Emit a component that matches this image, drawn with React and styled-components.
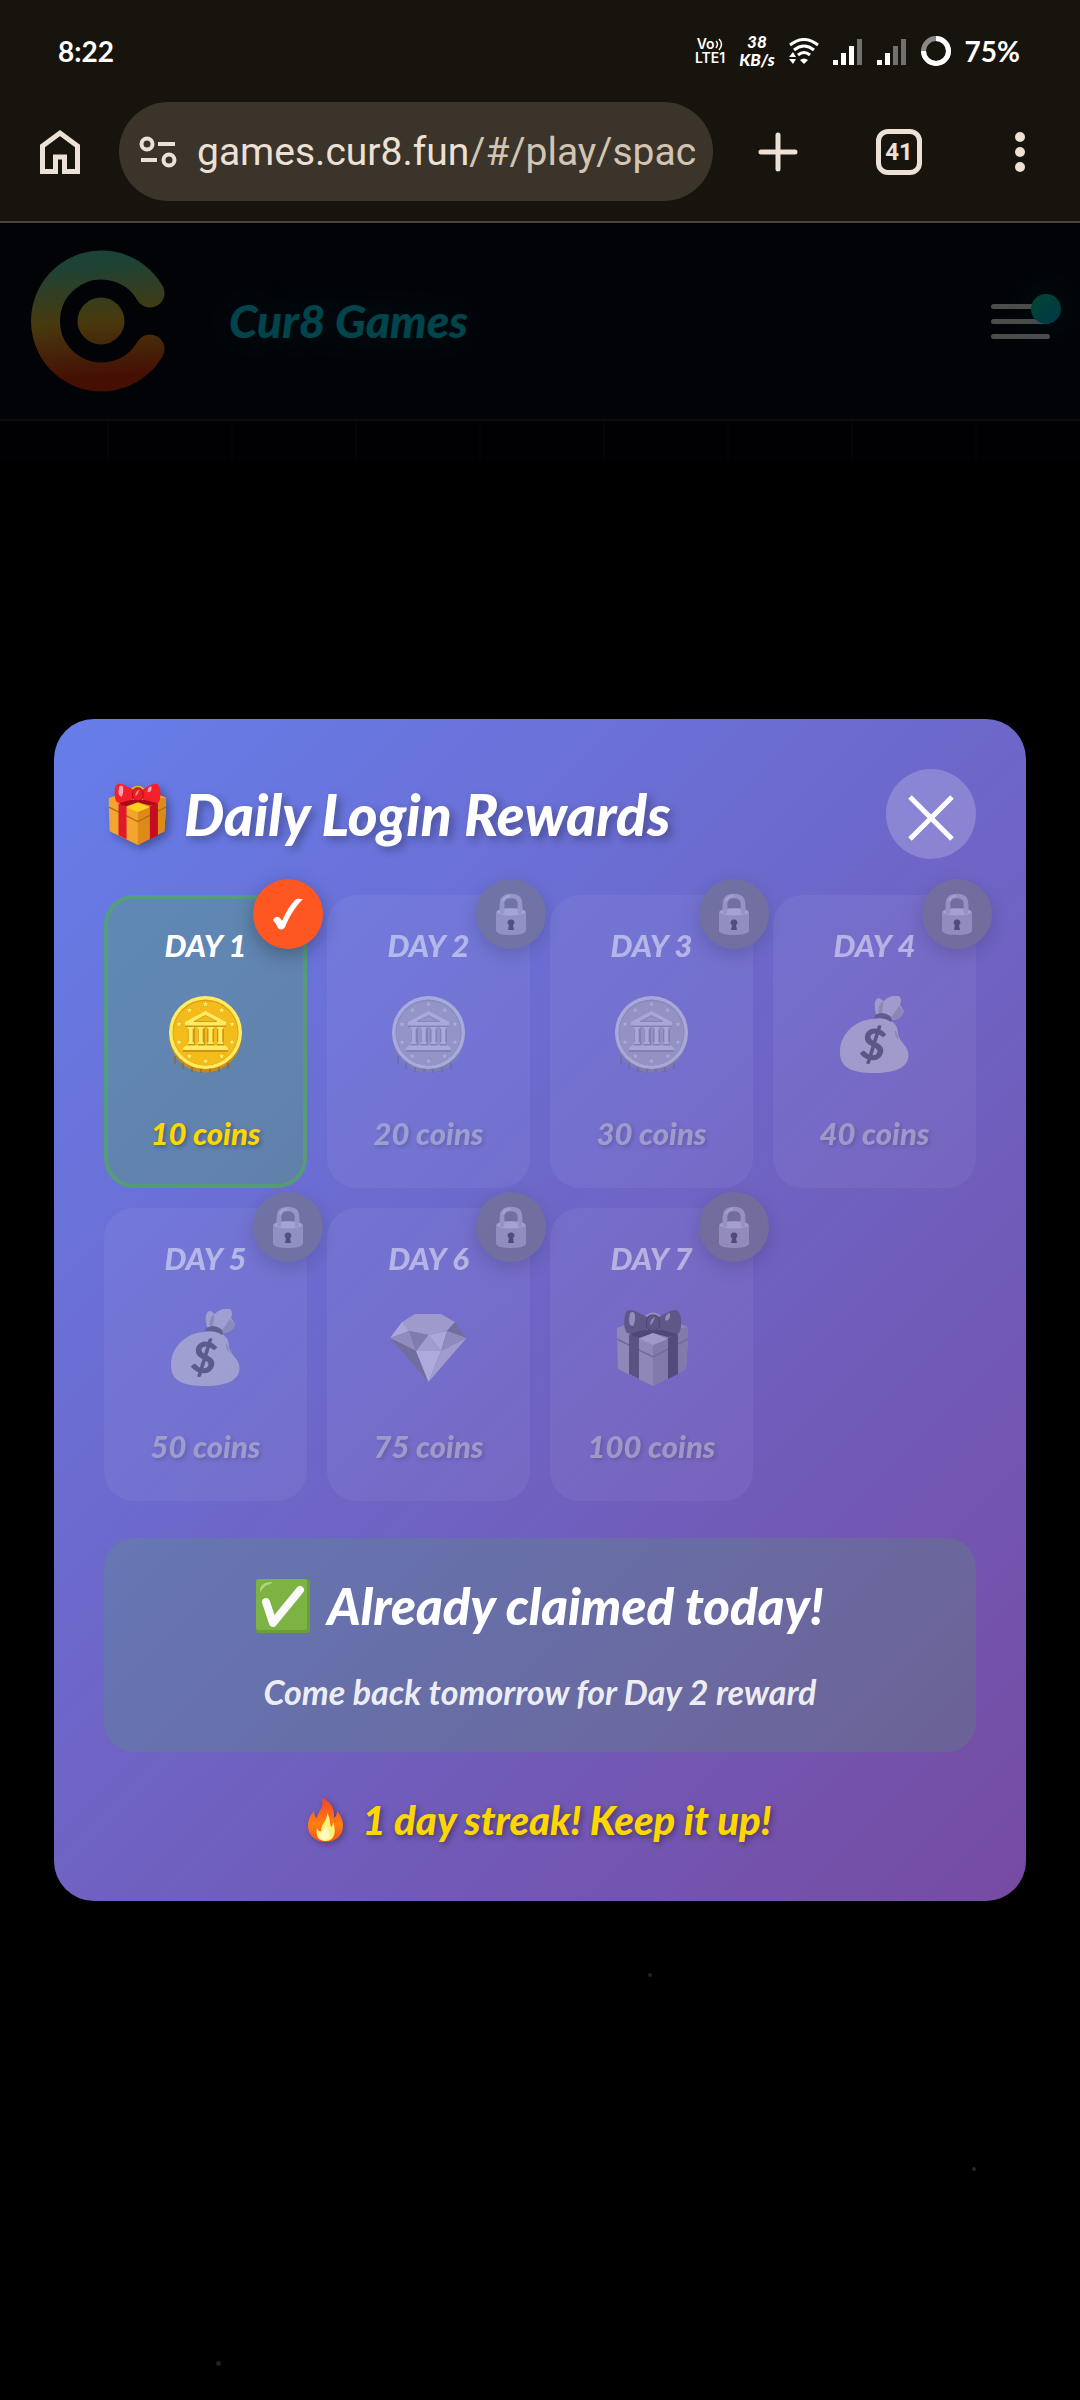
import React from 'react'
import styled, { createGlobalStyle } from "styled-components"

const GlobalStyle = createGlobalStyle`
* { box-sizing:border-box; }
body {
  margin:0;
  background-color:#000;
  font-family:Lato, "Liberation Sans", sans-serif;
}
button { font-family:inherit; }
svg { display:block; flex-shrink:0; }
`

const Page = styled.div`
display:flex;
flex-direction:column;
min-height:100vh;
`

/* phone and browser bars */

const Chrome = styled.div`
background-color:#17130d;
border-bottom:2px solid #4d453b;
`

const StatusBar = styled.div`
display:flex;
align-items:center;
justify-content:space-between;
height:102px;
padding:0 60px 0 58px;
color:white;
font-size:28px;
font-weight:700;
`

const StatusIcons = styled.div`
display:flex;
align-items:center;
gap:14px;
`

const Stacked = styled.div`
display:flex;
flex-direction:column;
align-items:center;
font-family:${({plain}) => plain ? "Inter, sans-serif" : "inherit"};
font-size:${({plain}) => plain ? "14px" : "17px"};
line-height:${({plain}) => plain ? "14px" : "18px"};
font-weight:${({plain}) => plain ? 600 : 900};
font-style:${({plain}) => plain ? "normal" : "italic"};
`

const Toolbar = styled.div`
display:flex;
align-items:center;
height:99px;
margin-bottom:20px;
padding:0 34px;
`

const BarButton = styled.button`
display:flex;
align-items:center;
justify-content:center;
width:52px;
height:72px;
padding:0;
border:none;
background-color:transparent;
cursor:pointer;
`

const AddressBar = styled.div`
display:flex;
align-items:center;
gap:20px;
flex:1;
min-width:0;
height:99px;
margin:0 39px 0 33px;
padding:0 16px 0 20px;
border-radius:50px;
background-color:#3b342b;
`

const Url = styled.a`
flex:1;
overflow:hidden;
white-space:nowrap;
font-family:Roboto, sans-serif;
font-size:39px;
line-height:56px;
color:#d3c4b4;
text-decoration:none;
`

const Host = styled.span`
color:#ede0d4;
`

const BarActions = styled.div`
display:flex;
align-items:center;
gap:69px;
`

const TabCount = styled.span`
display:flex;
align-items:center;
justify-content:center;
width:46px;
height:46px;
border:5px solid #ede0d4;
border-radius:12px;
color:#ede0d4;
font-family:Roboto, sans-serif;
font-size:24px;
font-weight:700;
`

/* game site */

const Site = styled.div`
position:relative;
flex:1;
display:flex;
flex-direction:column;
background-color:#000004;
`

const SiteHeader = styled.header`
display:flex;
align-items:center;
height:198px;
padding:0 30px 0 31px;
border-bottom:2px solid #2e2e2e;
background-color:#070a17;
`

const Brand = styled.h1`
flex:1;
margin:0 0 0 56px;
font-size:46px;
line-height:56px;
font-weight:900;
font-style:italic;
color:#00e5ff;
text-shadow:0 0 40px rgba(0,229,255,0.4);
`

const MenuButton = styled.button`
position:relative;
display:flex;
flex-direction:column;
gap:10px;
width:59px;
padding:0;
border:none;
background-color:transparent;
cursor:pointer;
`

const MenuLine = styled.span`
height:5px;
border-radius:3px;
background-color:#fff;
`

const MenuDot = styled.span`
position:absolute;
top:-10px;
right:-11px;
width:30px;
height:30px;
border-radius:50%;
background:linear-gradient(135deg,#00f0a8,#00b8f0);
box-shadow:0 0 40px rgba(0,240,190,0.4);
`

const GridStrip = styled.div`
height:40px;
background:repeating-linear-gradient(90deg,#04060c 0 107px,#0a0f18 107px 109px,#04060c 109px 124px);
`

const Sky = styled.div`
position:relative;
flex:1;
`

const Star = styled.span`
position:absolute;
top:${({top}) => top};
left:${({left}) => left};
width:${({size}) => size};
height:${({size}) => size};
border-radius:50%;
background-color:${({color}) => color};
`

const Overlay = styled.div`
position:absolute;
inset:0;
display:flex;
align-items:center;
justify-content:center;
padding-bottom:4px;
background-color:rgba(0,0,0,0.7);
`

/* rewards dialog */

const Modal = styled.section`
width:90%;
padding:50px;
border-radius:40px;
background:linear-gradient(135deg,#667eea 0%,#764ba2 100%);
box-shadow:0 20px 60px rgba(0,0,0,0.5);
color:white;
`

const ModalHeader = styled.div`
display:flex;
align-items:center;
justify-content:space-between;
margin-bottom:36px;
`

const Title = styled.h2`
display:flex;
align-items:center;
gap:18px;
margin:0;
padding-left:4px;
font-size:57px;
line-height:64px;
font-weight:900;
font-style:italic;
text-shadow:4px 4px 8px rgba(0,0,0,0.3);

svg { filter:drop-shadow(4px 4px 4px rgba(0,0,0,0.3)); }
`

const CloseButton = styled.button`
display:flex;
align-items:center;
justify-content:center;
width:90px;
height:90px;
padding:8px 0 0;
border:none;
border-radius:50%;
background-color:rgba(255,255,255,0.2);
cursor:pointer;
`

const Grid = styled.div`
display:grid;
grid-template-columns:repeat(4,1fr);
gap:20px;
margin-bottom:37px;
`

const Card = styled.div`
position:relative;
display:flex;
flex-direction:column;
align-items:center;
padding:28px 0 33px;
border:4px solid ${({claimed}) => claimed ? "rgba(76,175,80,0.7)" : "transparent"};
border-radius:30px;
background-color:${({claimed}) => claimed ? "rgba(76,175,80,0.3)" : "rgba(255,255,255,0.1)"};
background-clip:${({claimed}) => claimed ? "padding-box" : "border-box"};
filter:${({claimed}) => claimed ? "none" : "grayscale(1) opacity(0.5)"};
`

const Day = styled.div`
font-size:31px;
line-height:36px;
font-weight:900;
font-style:italic;
`

const Prize = styled.div`
display:flex;
align-items:center;
justify-content:center;
height:80px;
margin:32px 0 40px;
`

const Amount = styled.div`
font-size:31px;
line-height:36px;
font-weight:900;
font-style:italic;
color:#ffd700;
text-shadow:2px 2px 4px rgba(0,0,0,0.3);
`

const Badge = styled.div`
position:absolute;
top:-20px;
right:-20px;
display:flex;
align-items:center;
justify-content:center;
width:70px;
height:70px;
border-radius:50%;
background-color:#ff5722;
box-shadow:0 6px 20px rgba(0,0,0,0.3);
`

const ClaimedBox = styled.div`
display:flex;
flex-direction:column;
align-items:center;
padding:36px 20px;
margin-bottom:37px;
border-radius:30px;
background-color:rgba(76,175,80,0.2);
`

const ClaimedTitle = styled.h3`
display:flex;
align-items:center;
gap:17px;
margin:0 0 30px;
font-size:51px;
line-height:64px;
font-weight:900;
font-style:italic;
`

const ClaimedText = styled.p`
margin:0;
font-size:34px;
line-height:48px;
font-weight:700;
font-style:italic;
color:rgba(255,255,255,0.9);
`

const Streak = styled.div`
display:flex;
align-items:center;
justify-content:center;
gap:18px;
font-size:40px;
line-height:62px;
font-weight:900;
font-style:italic;
color:#ffd700;
text-shadow:2px 2px 6px rgba(0,0,0,0.4);

svg { filter:drop-shadow(2px 2px 3px rgba(0,0,0,0.3)); }
`

const GiftIcon = ({width = 72, height = 77}) => (
  <svg width={width} height={height} viewBox="0 0 72 77">
    <path d="M1 19 37 4 72 18 72 30 70 60 37 77 2 60 1 30Z" fill="#f2a62f"/>
    <path d="M37 24 72 18V30L70 60 37 77Z" fill="#dd8a18"/>
    <path d="M1 30 37 48 72 30" fill="none" stroke="#b06a14" strokeWidth="1.5"/>
    <path d="M23 30 37 24 52 30 37 36Z" fill="#fdd21e"/>
    <path d="M28 10Q37 0 46 10" fill="none" stroke="#e8b824" strokeWidth="3"/>
    <path d="M13 25 23 29V70L13 65Z" fill="#e0182c"/>
    <path d="M52 29 62 25V65L52 70Z" fill="#c40d22"/>
    <path d="M14 21H62Q64 27 52 28L37 24 23 29Q12 27 14 21Z" fill="#a80b1c"/>
    <path d="M31 8C22 3 13-2 10 3 8 8 7 19 11 24 16 26 22 21 31 21Z" fill="#f4202a"/>
    <path d="M43 8C52 3 60-2 63 3 66 8 66 19 63 24 58 26 52 21 43 21Z" fill="#f4202a"/>
    <rect x="30.500" y="6" width="13" height="16" rx="6" fill="#ee1c28" stroke="#a30c1c" strokeWidth="1.200"/>
    <path d="M14 4Q19 1 19 8 19 14 17 17 13 17 13 11Z" fill="#ffa3b0"/>
    <path d="M54 4Q49 5 49 11 52 13 54 8Z" fill="#ffa3b0"/>
    <path d="M39 8Q34 10 34 16 37 15 39 8Z" fill="#ff8c98"/>
  </svg>
)

const coinStars = [[36.5,8],[52.7,14],[63,28],[63,46],[52.7,60],[36.5,65],[20.3,60],[10,46],[10,28],[20.3,14]]

const CoinIcon = () => (
  <svg width="73" height="77" viewBox="0 0 73 77">
    <ellipse cx="36.500" cy="40" rx="36" ry="36.500" fill="#c98a1c"/>
    <path d="M6 60V68M14 67V73M23 71V76M32 73V77M41 73V77M50 71V76M59 67V73" stroke="#9a6310" strokeWidth="1.200"/>
    <circle cx="36.500" cy="36.500" r="36.500" fill="#fdec62"/>
    <circle cx="36.500" cy="36.500" r="33" fill="#d99c14"/>
    <circle cx="36.500" cy="37.200" r="32.300" fill="#f3bc1a"/>
    {coinStars.map(([x,y]) => (
      <path key={x + "-" + y} transform={`translate(${x} ${y})`} d="M0-3.500 1-1H3.400L1.500.7 2.200 3.200 0 1.800-2.200 3.200-1.500.7-3.400-1H-1Z" fill="#fdec62" stroke="#d99c14" strokeWidth=".4"/>
    ))}
    <path d="M16 31 16 27 36.500 16 57 27V31ZM19 32H26V50H19ZM29 32H36V50H29ZM38 32H45V50H38ZM48 32H55V50H48ZM14 52H59V56H14Z" fill="#cf9413"/>
    <path d="M16 29.500V26L36.500 15 57 26V29.500Z" fill="#fdec62"/>
    <path d="M25 25.500 36.500 19.500 48 25.500Z" fill="#f3bc1a" stroke="#d99c14"/>
    {[21.7,31.7,41.5,51.3].map((x) => (
      <path key={x} transform={`translate(${x} 31)`} d="M-3 0H3V2H2V15H3V17H-3V15H-2V2H-3Z" fill="#fdec62"/>
    ))}
    <path d="M17 49.500H56L59 52V54H14V52Z" fill="#fdec62"/>
  </svg>
)

const BagIcon = () => (
  <svg width="69" height="77" viewBox="0 0 69 77">
    <path d="M36 18C34 10 34 3 39 2 41 2 42 5 44 5 48 0 57-2 60 1 62 5 60 9 60 9L64 15Q62 23 53 24Z" fill="#fbd16a"/>
    <path d="M39 18Q37 10 43 5 44 10 41 19ZM50 23 59 10 64 15Q62 23 53 24Z" fill="#d9a644"/>
    <path d="M33 23C15 24 0 38 0 56 0 72 12 77 34 77 58 77 68.500 70 68.500 59 68 49 60 47 58 38 58 31 55 27 51 25 44 22 40 22 33 23Z" fill="#fbd16a"/>
    <path d="M55 34Q54 40 59 44 57 36 55 34Z" fill="#d9a644"/>
    <path d="M34 20Q42 14 50 20 53 23 51 26 43 21 35 22Z" fill="#7a4a2c"/>
    <text x="33" y="64" textAnchor="middle" transform="rotate(12 33 50)" fontFamily="Lato, sans-serif" fontWeight="900" fontSize="43" fill="#6f4528">$</text>
  </svg>
)

const GemIcon = () => (
  <svg width="77" height="68" viewBox="0 0 77 68">
    <path d="M25 0H51L65 8 57 17 38.500 21 19 17 12 8Z" fill="#9fd9f6"/>
    <path d="M12 8 19 17 0 24Z" fill="#c9effe"/>
    <path d="M65 8 76.500 24 57 17Z" fill="#3f7fae"/>
    <path d="M0 24 19 17 26 37Z" fill="#80bde2"/>
    <path d="M19 17 38.500 21 26 37Z" fill="#5b9cc9"/>
    <path d="M38.500 21 51 37H26Z" fill="#a5dcf8"/>
    <path d="M38.500 21 57 17 51 37Z" fill="#cdf0ff"/>
    <path d="M57 17 76.500 24 51 37Z" fill="#7db8dd"/>
    <path d="M0 24 26 37 38.500 68Z" fill="#3f7fae"/>
    <path d="M26 37H51L38.500 68Z" fill="#d8f4ff"/>
    <path d="M76.500 24 51 37 38.500 68Z" fill="#a5dcf8"/>
  </svg>
)

const LockIcon = () => (
  <svg width="30" height="42" viewBox="0 0 30 42">
    <path d="M6 20V11Q6 3 15 3 24 3 24 11V20" fill="none" stroke="#c9bdb3" strokeWidth="4.500"/>
    <path d="M7 8Q9 3 14 3" fill="none" stroke="#e5dcd4" strokeWidth="2"/>
    <path d="M0 19Q2 15 15 15 28 15 30 19V38Q28 42 15 42 2 42 0 38Z" fill="#e3b05a"/>
    <ellipse cx="15" cy="19" rx="14" ry="3.500" fill="#ffd98a"/>
    <path d="M6 12V19M24 12V19" stroke="#c9bdb3" strokeWidth="4.500" strokeLinecap="round"/>
    <path d="M15 26.500A3 3 0 0 1 17 32L18 37H12L13 32A3 3 0 0 1 15 26.500Z" fill="#3e3131"/>
  </svg>
)

const TickIcon = () => (
  <svg width="30" height="32" viewBox="0 0 30 32">
    <path d="M0 22C2 18 6 17 9 23 13 14 17 7 22 2 24 0 27 1 30 1 22 9 16 19 12 29 11 32 6 32 5 30 4 27 2 25 0 22Z" fill="#fff"/>
  </svg>
)

const GreenCheckIcon = () => (
  <svg width="54" height="54" viewBox="0 0 54 54">
    <rect width="54" height="54" rx="3" fill="#689f38"/>
    <rect width="51" height="51" rx="3" fill="#7cb342"/>
    <path d="M4 14Q3 3 16 3 16 5 11 6 7 8 4 14Z" fill="#aed581"/>
    <path d="M10 23 17 44 44 11" fill="none" stroke="#fafafa" strokeWidth="8" strokeLinecap="round" strokeLinejoin="round"/>
  </svg>
)

const FireIcon = () => (
  <svg width="36" height="44" viewBox="0 0 36 44">
    <defs>
      <linearGradient id="flame" x1="0" y1="0" x2="0" y2="1">
        <stop offset="0" stopColor="#f0442e"/>
        <stop offset=".6" stopColor="#ff7f0e"/>
        <stop offset="1" stopColor="#f4511e"/>
      </linearGradient>
    </defs>
    <path d="M13 0C22 2 27 10 26 20 28 19 29 16 29 13 33 17 35 22 35 28 35 38 27 44 18 44 8 44 0 38 0 28 0 21 3 16 6 13 6 16 7 19 9 20 10 13 18 8 13 0Z" fill="url(#flame)"/>
    <path d="M19 15C23 21 21 24 23 29 25 28 25 25 25 24 28 31 28 43 18 43 8 43 8 35 9 30 10 33 12 34 13 33 13 26 20 22 19 15Z" fill="#fff176"/>
    <path d="M19 24Q18 30 21 34 23 41 17 42 10 41 12 36 16 34 19 24Z" fill="#fff9c4"/>
  </svg>
)

const LogoIcon = () => (
  <svg width="142" height="142" viewBox="0 0 142 142">
    <defs>
      <linearGradient id="logo" gradientUnits="userSpaceOnUse" x1="60" y1="0" x2="71" y2="142">
        <stop offset=".1" stopColor="#62e0b4"/>
        <stop offset=".5" stopColor="#f2c030"/>
        <stop offset=".9" stopColor="#e8320f"/>
      </linearGradient>
    </defs>
    <path d="M119 43A56 56 0 1 0 119 99" fill="none" stroke="url(#logo)" strokeWidth="29" strokeLinecap="round"/>
    <circle cx="70" cy="71" r="23.500" fill="url(#logo)"/>
  </svg>
)

const Bars = ({lit}) => (
  <svg width="30" height="27" viewBox="0 0 30 27" fill="#fff">
    {[5,12,19,26].map((h,i) => (
      <rect key={h} x={i * 8} y={27 - h} width="5" height={h} opacity={i < lit ? 1 : 0.4}/>
    ))}
  </svg>
)

const WifiIcon = () => (
  <svg width="30" height="27" viewBox="0 0 30 27">
    <g fill="none" stroke="#fff" strokeWidth="3">
      <path d="M1 7Q15-4 29 7"/>
      <path d="M5 12Q15 4 25 12"/>
      <path d="M9 17Q15 12 21 17"/>
    </g>
    <path d="M15 26 11 22Q15 19 19 22ZM0 19 4 14 7 19ZM0 21H7L4 26Z" fill="#fff"/>
  </svg>
)

const VoIcon = () => (
  <svg width="9" height="13" viewBox="0 0 9 13" fill="none" stroke="#fff" strokeWidth="1.500">
    <path d="M1 3Q4 6 1 10M4 1Q9 6 4 12"/>
  </svg>
)

const VoRow = styled.span`
display:flex;
align-items:center;
`

const days = [
  {day:1, coins:10, Icon:CoinIcon, claimed:true},
  {day:2, coins:20, Icon:CoinIcon},
  {day:3, coins:30, Icon:CoinIcon},
  {day:4, coins:40, Icon:BagIcon},
  {day:5, coins:50, Icon:BagIcon},
  {day:6, coins:75, Icon:GemIcon},
  {day:7, coins:100, Icon:GiftIcon},
]

const BrowserBar = () => {
  return (
    <Chrome>
      <StatusBar>
        <span>8:22</span>
        <StatusIcons>
          <Stacked plain><VoRow>Vo<VoIcon/></VoRow><span>LTE1</span></Stacked>
          <Stacked><span>38</span><span>KB/s</span></Stacked>
          <WifiIcon/>
          <Bars lit={3}/>
          <Bars lit={2}/>
          <svg width="30" height="30" viewBox="0 0 30 30" fill="none" strokeWidth="5">
            <circle cx="15" cy="15" r="12.500" stroke="#8b8986"/>
            <path d="M15 2.500A12.500 12.500 0 1 1 2.500 15" stroke="#fff"/>
          </svg>
          <span>75%</span>
        </StatusIcons>
      </StatusBar>

      <Toolbar>
        <BarButton aria-label="Home">
          <svg width="40" height="46" viewBox="0 0 40 46" fill="none" stroke="#ede0d4" strokeWidth="5">
            <path d="M2.500 42.500V17L20 4 37.500 17V42.500H24.500V28H15.500V42.500Z"/>
          </svg>
        </BarButton>
        <AddressBar>
          <svg width="38" height="32" viewBox="0 0 38 32" fill="none" stroke="#ede0d4" strokeWidth="4">
            <circle cx="8" cy="8" r="5.500"/>
            <path d="M19 8H36M2 24H18"/>
            <circle cx="30" cy="24" r="5.500"/>
          </svg>
          <Url href="#/play/space"><Host>games.cur8.fun</Host>/#/play/spac</Url>
        </AddressBar>
        <BarActions>
          <BarButton aria-label="New tab">
            <svg width="40" height="40" viewBox="0 0 40 40" stroke="#ede0d4" strokeWidth="5" strokeLinecap="round">
              <path d="M20 3V37M3 20H37"/>
            </svg>
          </BarButton>
          <BarButton aria-label="Tabs"><TabCount>41</TabCount></BarButton>
          <BarButton aria-label="More">
            <svg width="10" height="40" viewBox="0 0 10 40" fill="#ede0d4">
              <circle cx="5" cy="5" r="5"/>
              <circle cx="5" cy="20" r="5"/>
              <circle cx="5" cy="35" r="5"/>
            </svg>
          </BarButton>
        </BarActions>
      </Toolbar>
    </Chrome>
  )
}

const RewardCard = ({day,coins,Icon,claimed}) => {
  return (
    <Card claimed={claimed}>
      <Day>DAY {day}</Day>
      <Prize><Icon/></Prize>
      <Amount>{coins} coins</Amount>
      <Badge>{claimed ? <TickIcon/> : <LockIcon/>}</Badge>
    </Card>
  )
}

const App = () => {
  return (
    <>
      <GlobalStyle/>
      <Page>
        <BrowserBar/>
        <Site>
          <SiteHeader>
            <LogoIcon/>
            <Brand>Cur8 Games</Brand>
            <MenuButton aria-label="Menu">
              <MenuLine/>
              <MenuLine/>
              <MenuLine/>
              <MenuDot/>
            </MenuButton>
          </SiteHeader>
          <GridStrip/>
          <Sky>
            <Star top="78%" left="60%" size="4px" color="#777"/>
            <Star top="88%" left="90%" size="4px" color="#888"/>
            <Star top="98%" left="20%" size="5px" color="#557788"/>
          </Sky>

          <Overlay>
            <Modal role="dialog" aria-labelledby="rewards-title">
              <ModalHeader>
                <Title id="rewards-title"><GiftIcon width={58} height={62}/>Daily Login Rewards</Title>
                <CloseButton aria-label="Close">
                  <svg width="46" height="46" viewBox="0 0 46 46" stroke="#fff" strokeWidth="5">
                    <path d="M2 2 44 44M44 2 2 44"/>
                  </svg>
                </CloseButton>
              </ModalHeader>

              <Grid>
                {days.map((item) => <RewardCard key={item.day} {...item}/>)}
              </Grid>

              <ClaimedBox>
                <ClaimedTitle><GreenCheckIcon/>Already claimed today!</ClaimedTitle>
                <ClaimedText>Come back tomorrow for Day 2 reward</ClaimedText>
              </ClaimedBox>

              <Streak><FireIcon/>1 day streak! Keep it up!</Streak>
            </Modal>
          </Overlay>
        </Site>
      </Page>
    </>
  )
}

export default App
